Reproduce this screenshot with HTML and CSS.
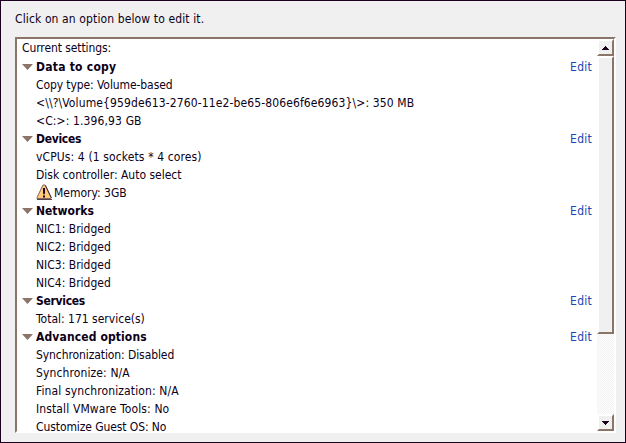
FILE: index.html
```
<!DOCTYPE html>
<html lang="en">
<head>
<meta charset="utf-8">
<title>Conversion options</title>
<link rel="stylesheet" href="styles.css">
</head>
<body>
<main class="dialog">
  <p class="hint wide">Click on an option below to edit it.</p>
  <div class="panel">
    <div class="settings">
      <div class="row caption tight">Current settings:</div>
      <div class="row heading"><i class="arrow"></i><b class="wider">Data to copy</b><a class="edit">Edit</a></div>
      <div class="row item tight">Copy type: Volume-based</div>
      <div class="row item wide">&lt;\\?\Volume{959de613-2760-11e2-be65-806e6f6e6963}\&gt;: 350 MB</div>
      <div class="row item wide">&lt;C:&gt;: 1.396,93 GB</div>
      <div class="row heading"><i class="arrow"></i><b class="tighter">Devices</b><a class="edit">Edit</a></div>
      <div class="row item wide">vCPUs: 4 (1 sockets * 4 cores)</div>
      <div class="row item">Disk controller: Auto select</div>
      <div class="row item"><svg class="warn" viewBox="0 0 16 16" width="16" height="16"><path d="M7 1h2l6 12.5v1H1v-1z" fill="#ffcb78" stroke="#806860"/><path d="M1 15.5h15M9.5 1.5l6 12.5" fill="none" stroke="#2b1020" stroke-width=".8"/><path d="M7 4h2v5l-.5 1.500h-1L7 9zM7 11.500h2v2H7z" fill="#1c0020"/></svg><span>Memory: 3GB</span></div>
      <div class="row heading"><i class="arrow"></i><b>Networks</b><a class="edit">Edit</a></div>
      <div class="row item">NIC1: Bridged</div>
      <div class="row item">NIC2: Bridged</div>
      <div class="row item">NIC3: Bridged</div>
      <div class="row item">NIC4: Bridged</div>
      <div class="row heading"><i class="arrow"></i><b class="tighter">Services</b><a class="edit">Edit</a></div>
      <div class="row item">Total: 171 service(s)</div>
      <div class="row heading"><i class="arrow"></i><b class="wide">Advanced options</b><a class="edit">Edit</a></div>
      <div class="row item tight">Synchronization: Disabled</div>
      <div class="row item wide">Synchronize: N/A</div>
      <div class="row item wide">Final synchronization: N/A</div>
      <div class="row item wide">Install VMware Tools: No</div>
      <div class="row item tight">Customize Guest OS: No</div>
    </div>
    <div class="scrollbar">
      <div class="button"><svg width="7" height="4" viewBox="0 0 7 4" shape-rendering="crispEdges"><path d="M3 0h1v1h1v1h1v1h1v1H0V3h1V2h1V1h1z" fill="#1c0020"/></svg></div>
      <div class="thumb"></div>
      <div class="track"></div>
      <div class="button"><svg width="7" height="4" viewBox="0 0 7 4" shape-rendering="crispEdges"><path d="M0 0h7v1H6v1H5v1H4v1H3V3H2V2H1V1H0z" fill="#1c0020"/></svg></div>
    </div>
  </div>
</main>
</body>
</html>
```
FILE: styles.css
```
* { box-sizing: border-box; }
body {
  margin: 0;
  font: 12px/18px "DejaVu Sans Condensed", "DejaVu Sans", sans-serif;
  font-stretch: condensed;
  color: #0c0018;
}
.dialog {
  width: 626px;
  height: 443px;
  padding: 9px 9px 9px 14px;
  background: #f0f0f0;
  border: 1px solid #1c0020;
  overflow: hidden;
}
.hint { margin: 0 0 9px; }
.panel {
  display: flex;
  width: 601px;
  height: 396px;
  background: #fff;
  border: 2px solid #8b7468;
  border-right-color: #fff;
  border-bottom-color: #fff;
  overflow: hidden;
}
.settings { flex: 1; padding: 0 5px; white-space: nowrap; }
.row { display: flex; height: 18px; }
.caption { height: 19px; }
.item { padding-left: 14px; }
.heading { align-items: center; }
.wide { letter-spacing: 0.12px; }
.wider { letter-spacing: 0.25px; }
.tight { letter-spacing: -0.09px; }
.tighter { letter-spacing: -0.3px; }
.arrow {
  width: 11px;
  height: 6px;
  margin-right: 3px;
  background: #8b7468;
  clip-path: polygon(0 0, 100% 0, 50% 100%);
}
.edit { margin-left: auto; color: #2048b0; letter-spacing: 0.25px; }
.warn { margin-right: 2px; }
.scrollbar { display: flex; flex-direction: column; width: 17px; }
.button, .thumb {
  background: #f0f0f0;
  border: 2px solid #8b7468;
  border-top-color: #fff;
  border-left-color: #fff;
}
.button { display: flex; justify-content: center; align-items: center; height: 17px; }
.thumb { height: 278px; }
.track { flex: 1; background: repeating-conic-gradient(#f0f0f0 0 25%, #fff 0 50%) 0 0 / 2px 2px; }
```
